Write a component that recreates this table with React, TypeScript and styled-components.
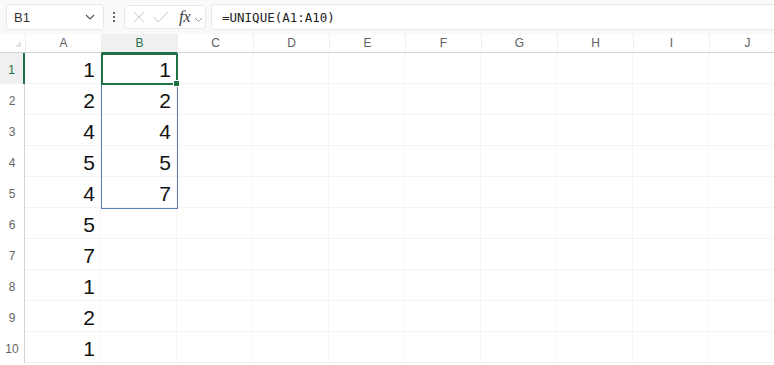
import styled, { createGlobalStyle } from 'styled-components'

const GlobalStyle = createGlobalStyle`
  html, body {
    margin: 0;
    padding: 0;
    background: #ffffff;
    overflow: hidden;
  }
  body {
    font-family: 'Liberation Sans', Arial, sans-serif;
  }
`

const COL_W = 76
const ROW_H = 31
const HEAD_W = 25
const HEAD_H = 19
const columns = ['A', 'B', 'C', 'D', 'E', 'F', 'G', 'H', 'I', 'J']
const colA = [1, 2, 4, 5, 4, 5, 7, 1, 2, 1]
const colB = [1, 2, 4, 5, 7]

const Page = styled.div`
  width: 774px;
  height: 365px;
  overflow: hidden;
  background: #fff;
`

const FormulaBar = styled.div`
  display: flex;
  align-items: center;
  height: 34px;
  padding: 0 0 0 6px;
  background: #f9f9f9;
  box-sizing: border-box;
`

const Box = styled.div<{ width?: number }>`
  display: flex;
  align-items: center;
  height: 26px;
  box-sizing: border-box;
  background: #fff;
  border: 1px solid #e8e8e8;
  border-radius: 4px;
  ${(p) => (p.width ? `width: ${p.width}px;` : 'flex: 1;')}
`

const NameBox = styled(Box)`
  justify-content: space-between;
  padding: 0 8px 0 7px;
  font-size: 13px;
  color: #333;
`

const Dots = styled.div`
  width: 20px;
  display: flex;
  justify-content: center;
`

const Buttons = styled(Box)`
  padding-left: 4px;
  height: 24px;
  margin-right: 5px;
`

const Formula = styled(Box)`
  padding-left: 10px;
  font-family: 'DejaVu Sans Mono', 'Liberation Mono', monospace;
  font-size: 12.5px;
  color: #222;
  border-right: none;
  border-radius: 4px 0 0 4px;
`

const Fx = styled.span`
  font-family: 'Liberation Serif', serif;
  font-style: italic;
  font-size: 17px;
  color: #444;
  margin-left: 6px;
  letter-spacing: -0.5px;
`

const Sheet = styled.div`
  position: relative;
  display: grid;
  grid-template-columns: ${HEAD_W}px repeat(${columns.length}, ${COL_W}px);
  grid-template-rows: ${HEAD_H}px repeat(10, ${ROW_H}px);
`

const Corner = styled.div`
  position: relative;
  border-bottom: 1px solid #d4d4d4;
  background: #fff;
`

const CornerMark = styled.div`
  position: absolute;
  right: 4px;
  bottom: 5px;
  width: 0;
  height: 0;
  border-left: 6px solid transparent;
  border-bottom: 6px solid #e0e0e0;
`

const ColHead = styled.div<{ $active?: boolean }>`
  display: flex;
  align-items: center;
  justify-content: center;
  font-size: 12px;
  color: ${(p) => (p.$active ? '#1e7145' : '#616161')};
  background: ${(p) => (p.$active ? '#f0f0f0' : '#fff')};
  border-bottom: 1px solid ${(p) => (p.$active ? '#1e7145' : '#d4d4d4')};
  border-left: 1px solid #eeeeee;
`

const RowHead = styled.div<{ $active?: boolean }>`
  display: flex;
  align-items: center;
  justify-content: center;
  padding-top: 3px;
  box-sizing: border-box;
  font-size: 12px;
  color: ${(p) => (p.$active ? '#1e7145' : '#666')};
  background: ${(p) => (p.$active ? '#f0f0f0' : '#fff')};
  border-right: ${(p) => (p.$active ? '2px solid #1e7145' : '1px solid #d4d4d4')};
`

const Cell = styled.div`
  display: flex;
  align-items: center;
  justify-content: flex-end;
  padding: 3px 5px 0 0;
  box-sizing: border-box;
  font-family: 'Liberation Sans', Arial, sans-serif;
  font-size: 21px;
  color: #111;
  border-bottom: 1px solid #f4f4f4;
  border-right: 1px solid #f6f6f6;
`

const Spill = styled.div`
  position: absolute;
  left: ${HEAD_W + COL_W}px;
  top: ${HEAD_H}px;
  width: ${COL_W + 1}px;
  height: ${ROW_H * 5 + 1}px;
  box-sizing: border-box;
  border: 1px solid #5b7fb5;
  pointer-events: none;
`

const Selection = styled.div`
  position: absolute;
  left: ${HEAD_W + COL_W}px;
  top: ${HEAD_H}px;
  width: ${COL_W + 1}px;
  height: ${ROW_H + 1}px;
  box-sizing: border-box;
  border: 2px solid #1e7145;
  pointer-events: none;
`

const Handle = styled.div`
  position: absolute;
  right: -4px;
  bottom: -4px;
  width: 5px;
  height: 5px;
  background: #1e7145;
  border: 1px solid #fff;
`

const Chevron = ({ size = 10, color = '#555' }: { size?: number; color?: string }) => (
  <svg width={size} height={size * 0.6} viewBox="0 0 10 6">
    <path d="M1 1l4 4 4-4" fill="none" stroke={color} strokeWidth="1.1" />
  </svg>
)

const Row = ({ index, a, b }: { index: number; a: number; b?: number }) => (
  <>
    <RowHead $active={index === 0}>{index + 1}</RowHead>
    <Cell>{a}</Cell>
    <Cell>{b ?? ''}</Cell>
    {columns.slice(2).map((c) => (
      <Cell key={c} />
    ))}
  </>
)

export default function App() {
  return (
    <Page>
      <GlobalStyle />
      <FormulaBar>
        <NameBox width={98}>
          <span>B1</span>
          <Chevron />
        </NameBox>
        <Dots>
          <svg width="4" height="12" viewBox="0 0 4 12">
            <circle cx="2" cy="2" r="1.1" fill="#444" />
            <circle cx="2" cy="6" r="1.1" fill="#444" />
            <circle cx="2" cy="10" r="1.1" fill="#444" />
          </svg>
        </Dots>
        <Buttons width={82}>
          <svg width="20" height="14" viewBox="0 0 20 14">
            <path d="M5 2l10 10M15 2L5 12" stroke="#c8c8c8" strokeWidth="1" fill="none" />
          </svg>
          <svg width="24" height="14" viewBox="0 0 24 14">
            <path d="M5 7l4 5 10-10" stroke="#c8c8c8" strokeWidth="1" fill="none" />
          </svg>
          <Fx>fx</Fx>
          <span style={{ marginLeft: 4 }}>
            <Chevron size={9} color="#999" />
          </span>
        </Buttons>
        <Formula>=UNIQUE(A1:A10)</Formula>
      </FormulaBar>
      <Sheet>
        <Corner>
          <CornerMark />
        </Corner>
        {columns.map((c) => (
          <ColHead key={c} $active={c === 'B'}>
            {c}
          </ColHead>
        ))}
        {colA.map((a, i) => (
          <Row key={i} index={i} a={a} b={colB[i]} />
        ))}
        <Spill />
        <Selection>
          <Handle />
        </Selection>
      </Sheet>
    </Page>
  )
}
